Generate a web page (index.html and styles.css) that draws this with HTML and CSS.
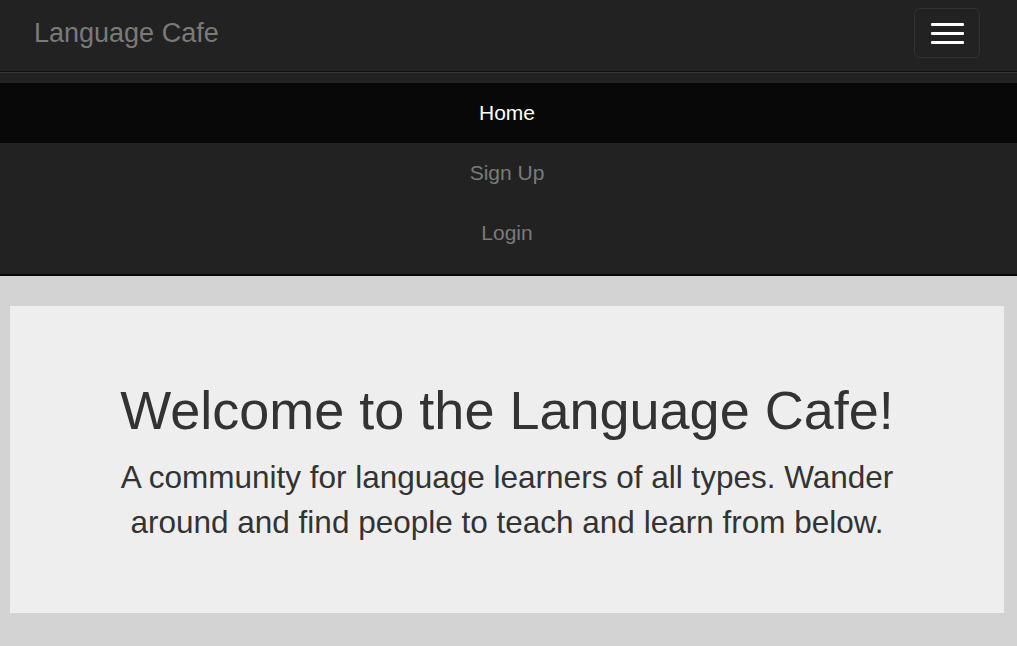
FILE: index.html
```html
<!DOCTYPE html>
<html lang="en">
<head>
<meta charset="utf-8">
<title>Language Cafe</title>
<link rel="stylesheet" href="styles.css">
</head>
<body>
<nav class="navbar">
  <div class="navbar-header">
    <a class="brand" href="#">Language Cafe</a>
    <button class="toggle" type="button" aria-label="Toggle navigation">
      <span class="bar"></span>
      <span class="bar"></span>
      <span class="bar"></span>
    </button>
  </div>
  <div class="collapse">
    <ul class="nav">
      <li class="active"><a href="#">Home</a></li>
      <li><a href="#">Sign Up</a></li>
      <li><a href="#">Login</a></li>
    </ul>
  </div>
</nav>
<main class="jumbotron">
  <div class="jumbo-inner">
    <h1>Welcome to the Language Cafe!</h1>
    <p>A community for language learners of all types. Wander around and find people to teach and learn from below.</p>
  </div>
</main>
</body>
</html>
```

FILE: styles.css
```css
* { box-sizing: border-box; }
html, body { margin: 0; padding: 0; }
body {
  background: #d3d3d3;
  font-family: "Liberation Sans", Arial, Helvetica, sans-serif;
  color: #333;
}
.navbar {
  background: #222;
  border-bottom: 2px solid #080808;
}
.navbar-header {
  height: 71px;
  display: flex;
  justify-content: space-between;
  align-items: flex-start;
}
.brand {
  display: block;
  padding: 18px 0 0 34px;
  font-size: 27px;
  line-height: 30px;
  color: #7a7a7a;
  text-decoration: none;
}
.toggle {
  margin: 8px 37px 0 0;
  width: 66px;
  height: 50px;
  background: transparent;
  border: 1px solid #333;
  border-radius: 6px;
  padding: 0;
  display: flex;
  flex-direction: column;
  align-items: center;
  justify-content: center;
  gap: 6px;
}
.bar {
  display: block;
  width: 33px;
  height: 3px;
  background: #fff;
  border-radius: 1px;
}
.collapse {
  border-top: 1px solid #101010;
  box-shadow: inset 0 1px 0 rgba(255,255,255,0.1);
  padding: 11px 0 11px;
}
.nav {
  list-style: none;
  margin: 0;
  padding: 0;
}
.nav a {
  display: block;
  padding: 15px 18px 15px 15px;
  font-size: 21px;
  line-height: 30px;
  text-align: center;
  color: #7a7a7a;
  text-decoration: none;
}
.nav .active a {
  background: #080808;
  color: #fff;
}
.jumbotron {
  margin: 30px 13px 0 10px;
  background: #eee;
  padding: 45px 22px;
  text-align: center;
}
.jumbo-inner {
  max-width: 820px;
  margin: 0 auto;
}
.jumbotron h1 {
  margin: 30px 0 15px;
  font-size: 54px;
  line-height: 1.1;
  font-weight: 400;
  color: #333;
}
.jumbotron p {
  margin: 0 0 22.5px;
  font-size: 31.5px;
  line-height: 45px;
  font-weight: 400;
}
```
